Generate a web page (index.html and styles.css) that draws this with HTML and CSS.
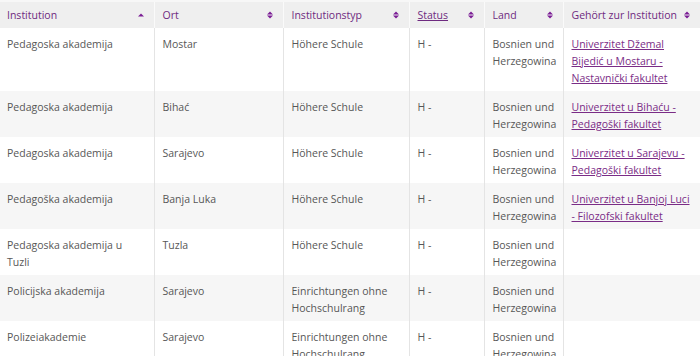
FILE: index.html
```html
<!DOCTYPE html>
<html lang="de">
<head>
<meta charset="utf-8">
<link rel="stylesheet" href="styles.css">
</head>
<body>
<table class="grid">
  <colgroup>
    <col class="c1"><col class="c2"><col class="c3"><col class="c4"><col class="c5"><col class="c6">
  </colgroup>
  <thead>
    <tr>
      <th><span class="hd"><span>Institution</span><svg class="sort" viewBox="0 0 8 10"><path d="M1 6.5 L4 3.5 L7 6.5 Z"/></svg></span></th>
      <th><span class="hd"><span>Ort</span><svg class="sort" viewBox="0 0 8 10"><path d="M1 4.5 L4 1.5 L7 4.5 Z M1 5.5 L4 8.5 L7 5.5 Z"/></svg></span></th>
      <th><span class="hd"><span>Institutionstyp</span><svg class="sort" viewBox="0 0 8 10"><path d="M1 4.5 L4 1.5 L7 4.5 Z M1 5.5 L4 8.5 L7 5.5 Z"/></svg></span></th>
      <th><span class="hd"><a class="hlink" href="#">Status</a><svg class="sort" viewBox="0 0 8 10"><path d="M1 4.5 L4 1.5 L7 4.5 Z M1 5.5 L4 8.5 L7 5.5 Z"/></svg></span></th>
      <th><span class="hd"><span>Land</span><svg class="sort" viewBox="0 0 8 10"><path d="M1 4.5 L4 1.5 L7 4.5 Z M1 5.5 L4 8.5 L7 5.5 Z"/></svg></span></th>
      <th><span class="hd"><span>Gehört zur Institution</span><svg class="sort" viewBox="0 0 8 10"><path d="M1 4.5 L4 1.5 L7 4.5 Z M1 5.5 L4 8.5 L7 5.5 Z"/></svg></span></th>
    </tr>
  </thead>
  <tbody>
    <tr>
      <td>Pedagoska akademija</td><td>Mostar</td><td>Höhere Schule</td><td>H -</td><td>Bosnien und Herzegowina</td>
      <td><a href="#">Univerzitet Džemal Bijedić u Mostaru - Nastavnički fakultet</a></td>
    </tr>
    <tr class="alt">
      <td>Pedagoska akademija</td><td>Bihać</td><td>Höhere Schule</td><td>H -</td><td>Bosnien und Herzegowina</td>
      <td><a href="#">Univerzitet u Bihaću - Pedagoški fakultet</a></td>
    </tr>
    <tr>
      <td>Pedagoska akademija</td><td>Sarajevo</td><td>Höhere Schule</td><td>H -</td><td>Bosnien und Herzegowina</td>
      <td><a href="#">Univerzitet u Sarajevu - Pedagoški fakultet</a></td>
    </tr>
    <tr class="alt">
      <td>Pedagoška akademija</td><td>Banja Luka</td><td>Höhere Schule</td><td>H -</td><td>Bosnien und Herzegowina</td>
      <td><a href="#">Univerzitet u Banjoj Luci - Filozofski fakultet</a></td>
    </tr>
    <tr>
      <td>Pedagoska akademija u Tuzli</td><td>Tuzla</td><td>Höhere Schule</td><td>H -</td><td>Bosnien und Herzegowina</td><td></td>
    </tr>
    <tr class="alt">
      <td>Policijska akademija</td><td>Sarajevo</td><td>Einrichtungen ohne Hochschulrang</td><td>H -</td><td>Bosnien und Herzegowina</td><td></td>
    </tr>
    <tr>
      <td>Polizeiakademie</td><td>Sarajevo</td><td>Einrichtungen ohne Hochschulrang</td><td>H -</td><td>Bosnien und Herzegowina</td><td></td>
    </tr>
  </tbody>
</table>
</body>
</html>
```

FILE: styles.css
```css
html, body {
  margin: 0;
  padding: 0;
  background: #ffffff;
}
body {
  font-family: "Open Sans", "Noto Sans", sans-serif;
  font-size: 10.5px;
  color: #575757;
}
.grid {
  width: 700px;
  border-collapse: collapse;
  table-layout: fixed;
}
.c1 { width: 154px; }
.c2 { width: 129px; }
.c3 { width: 126px; }
.c4 { width: 75px; }
.c5 { width: 79px; }
.c6 { width: 137px; }

thead th {
  background: #efefef;
  height: 26px;
  padding: 0 8px 0 8px;
  text-align: left;
  font-weight: normal;
  color: #6e2a80;
  border-left: 1px solid #fafafa;
  border-top: 2px solid #f7f7f7;
  white-space: nowrap;
}
thead th:first-child { border-left: none; padding-left: 7px; }
.hd {
  display: flex;
  align-items: center;
  justify-content: space-between;
}
.hlink {
  color: #6e2a80;
  text-decoration: underline;
}
.sort {
  width: 8px;
  height: 10px;
  fill: #7b1e95;
  flex: none;
  margin-right: 1px;
}
tbody td {
  vertical-align: top;
  padding: 8px 8px 4px 8px;
  line-height: 17px;
  border-left: 1px solid #e4e4e4;
}
tbody td:first-child { border-left: none; padding-left: 7px; }
tbody tr.alt td { background: #f6f6f6; }
tbody a {
  color: #7a2c86;
  text-decoration: underline;
}
```
